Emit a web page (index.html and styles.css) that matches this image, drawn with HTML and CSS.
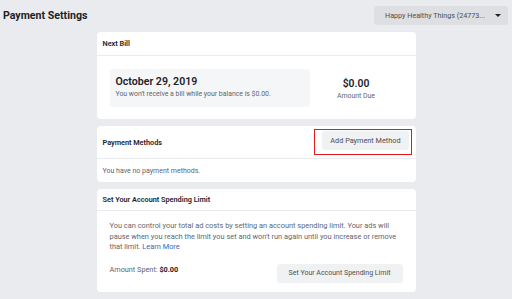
FILE: index.html
```html
<!DOCTYPE html>
<html lang="en">
<head>
  <meta charset="UTF-8">
  <title>Payment Settings</title>
  <link rel="stylesheet" href="styles.css">
</head>
<body>
  <header class="topbar">
    <h1 class="title">Payment Settings</h1>
    <div class="account-select">
      <span>Happy Healthy Things (24773...</span>
      <span class="caret"></span>
    </div>
  </header>

  <main class="content">
    <section class="card">
      <div class="card-head">Next Bill</div>
      <div class="bill-body">
        <div class="bill-box">
          <div class="bill-date">October 29, 2019</div>
          <div class="bill-note">You won't receive a bill while your balance is $0.00.</div>
        </div>
        <div class="amount">
          <div class="amount-value">$0.00</div>
          <div class="amount-label">Amount Due</div>
        </div>
      </div>
    </section>

    <section class="card">
      <div class="card-head methods-head">
        <span>Payment Methods</span>
        <div class="highlight">
          <button class="btn">Add Payment Method</button>
        </div>
      </div>
      <div class="methods-body">You have no payment methods.</div>
    </section>

    <section class="card">
      <div class="card-head limit-head">Set Your Account Spending Limit</div>
      <div class="limit-body">
        <p class="limit-text">You can control your total ad costs by setting an account spending limit. Your ads will pause when you reach the limit you set and won't run again until you increase or remove that limit. <a href="#">Learn More</a></p>
        <div class="limit-row">
          <span class="spent">Amount Spent: <strong>$0.00</strong></span>
          <button class="btn btn-limit">Set Your Account Spending Limit</button>
        </div>
      </div>
    </section>
  </main>
</body>
</html>
```

FILE: styles.css
```css
body {
  font-family: Roboto, "Liberation Sans", sans-serif;
  margin: 0;
  padding: 0;
  background-color: #e9ebee;
  color: #1d2129;
}

.topbar {
  display: flex;
  justify-content: space-between;
  align-items: center;
  padding: 5px 4px 0 3px;
  height: 20px;
}

.title {
  margin: 0;
  font-size: 10.6px;
  font-weight: bold;
  color: #1d2129;
}

.account-select {
  display: flex;
  align-items: center;
  justify-content: space-between;
  width: 134px;
  height: 19px;
  box-sizing: border-box;
  padding: 0 7px 0 11px;
  background-color: #dddfe2;
  border-radius: 3px;
  font-size: 7.2px;
  color: #4b4f56;
}

.caret {
  width: 0;
  height: 0;
  border-left: 3px solid transparent;
  border-right: 3px solid transparent;
  border-top: 3px solid #1d2129;
}

.content {
  width: 319px;
  margin: 7px auto 0;
  display: flex;
  flex-direction: column;
  gap: 7px;
}

.card {
  background-color: #fff;
  border-radius: 4px;
}

.card-head {
  height: 23px;
  padding: 0 6px;
  display: flex;
  align-items: center;
  border-bottom: 1px solid #e9ebee;
  font-size: 7.3px;
  font-weight: 600;
  color: #1d2129;
}

.bill-body {
  display: flex;
  padding: 13px 13px 12px;
}

.bill-box {
  width: 200px;
  height: 38px;
  box-sizing: border-box;
  padding: 6px 6px;
  background-color: #f5f6f7;
  border-radius: 3px;
}

.bill-date {
  font-size: 10.6px;
  font-weight: 600;
  line-height: 14px;
}

.bill-note {
  font-size: 6.9px;
  color: #606770;
  margin-top: 1px;
}

.amount {
  flex: 1;
  display: flex;
  flex-direction: column;
  align-items: center;
  justify-content: center;
}

.amount-value {
  font-size: 10.4px;
  font-weight: 600;
  line-height: 14px;
}

.amount-label {
  font-size: 6.9px;
  color: #606770;
  margin-top: 1px;
}

.methods-head {
  height: 32px;
  justify-content: space-between;
  padding-right: 3px;
}

.highlight {
  border: 1.5px solid #e0191b;
  padding: 1.5px 2px 4px 7px;
  margin-right: 1px;
}

.btn {
  font-family: Roboto, "Liberation Sans", sans-serif;
  height: 19px;
  padding: 0 8px;
  border: none;
  border-radius: 3px;
  background-color: #f0f1f3;
  color: #4b4f56;
  font-size: 7.3px;
}

.methods-body {
  padding: 0 6px;
  height: 23px;
  display: flex;
  align-items: center;
  font-size: 7px;
  color: #606770;
}

.limit-head {
  height: 21px;
}

.limit-body {
  padding: 10px 13px 9px;
}

.limit-text {
  margin: 0;
  font-size: 7.4px;
  line-height: 10.5px;
  color: #606770;
}

.limit-text a {
  color: #4267b2;
  text-decoration: none;
}

.limit-row {
  display: flex;
  justify-content: space-between;
  align-items: flex-start;
  margin-top: 11px;
}

.spent {
  font-size: 7.3px;
  color: #606770;
  margin-top: 1px;
}

.spent strong {
  color: #1d2129;
}

.btn-limit {
  width: 126px;
  padding: 0;
  font-size: 7px;
}
```
